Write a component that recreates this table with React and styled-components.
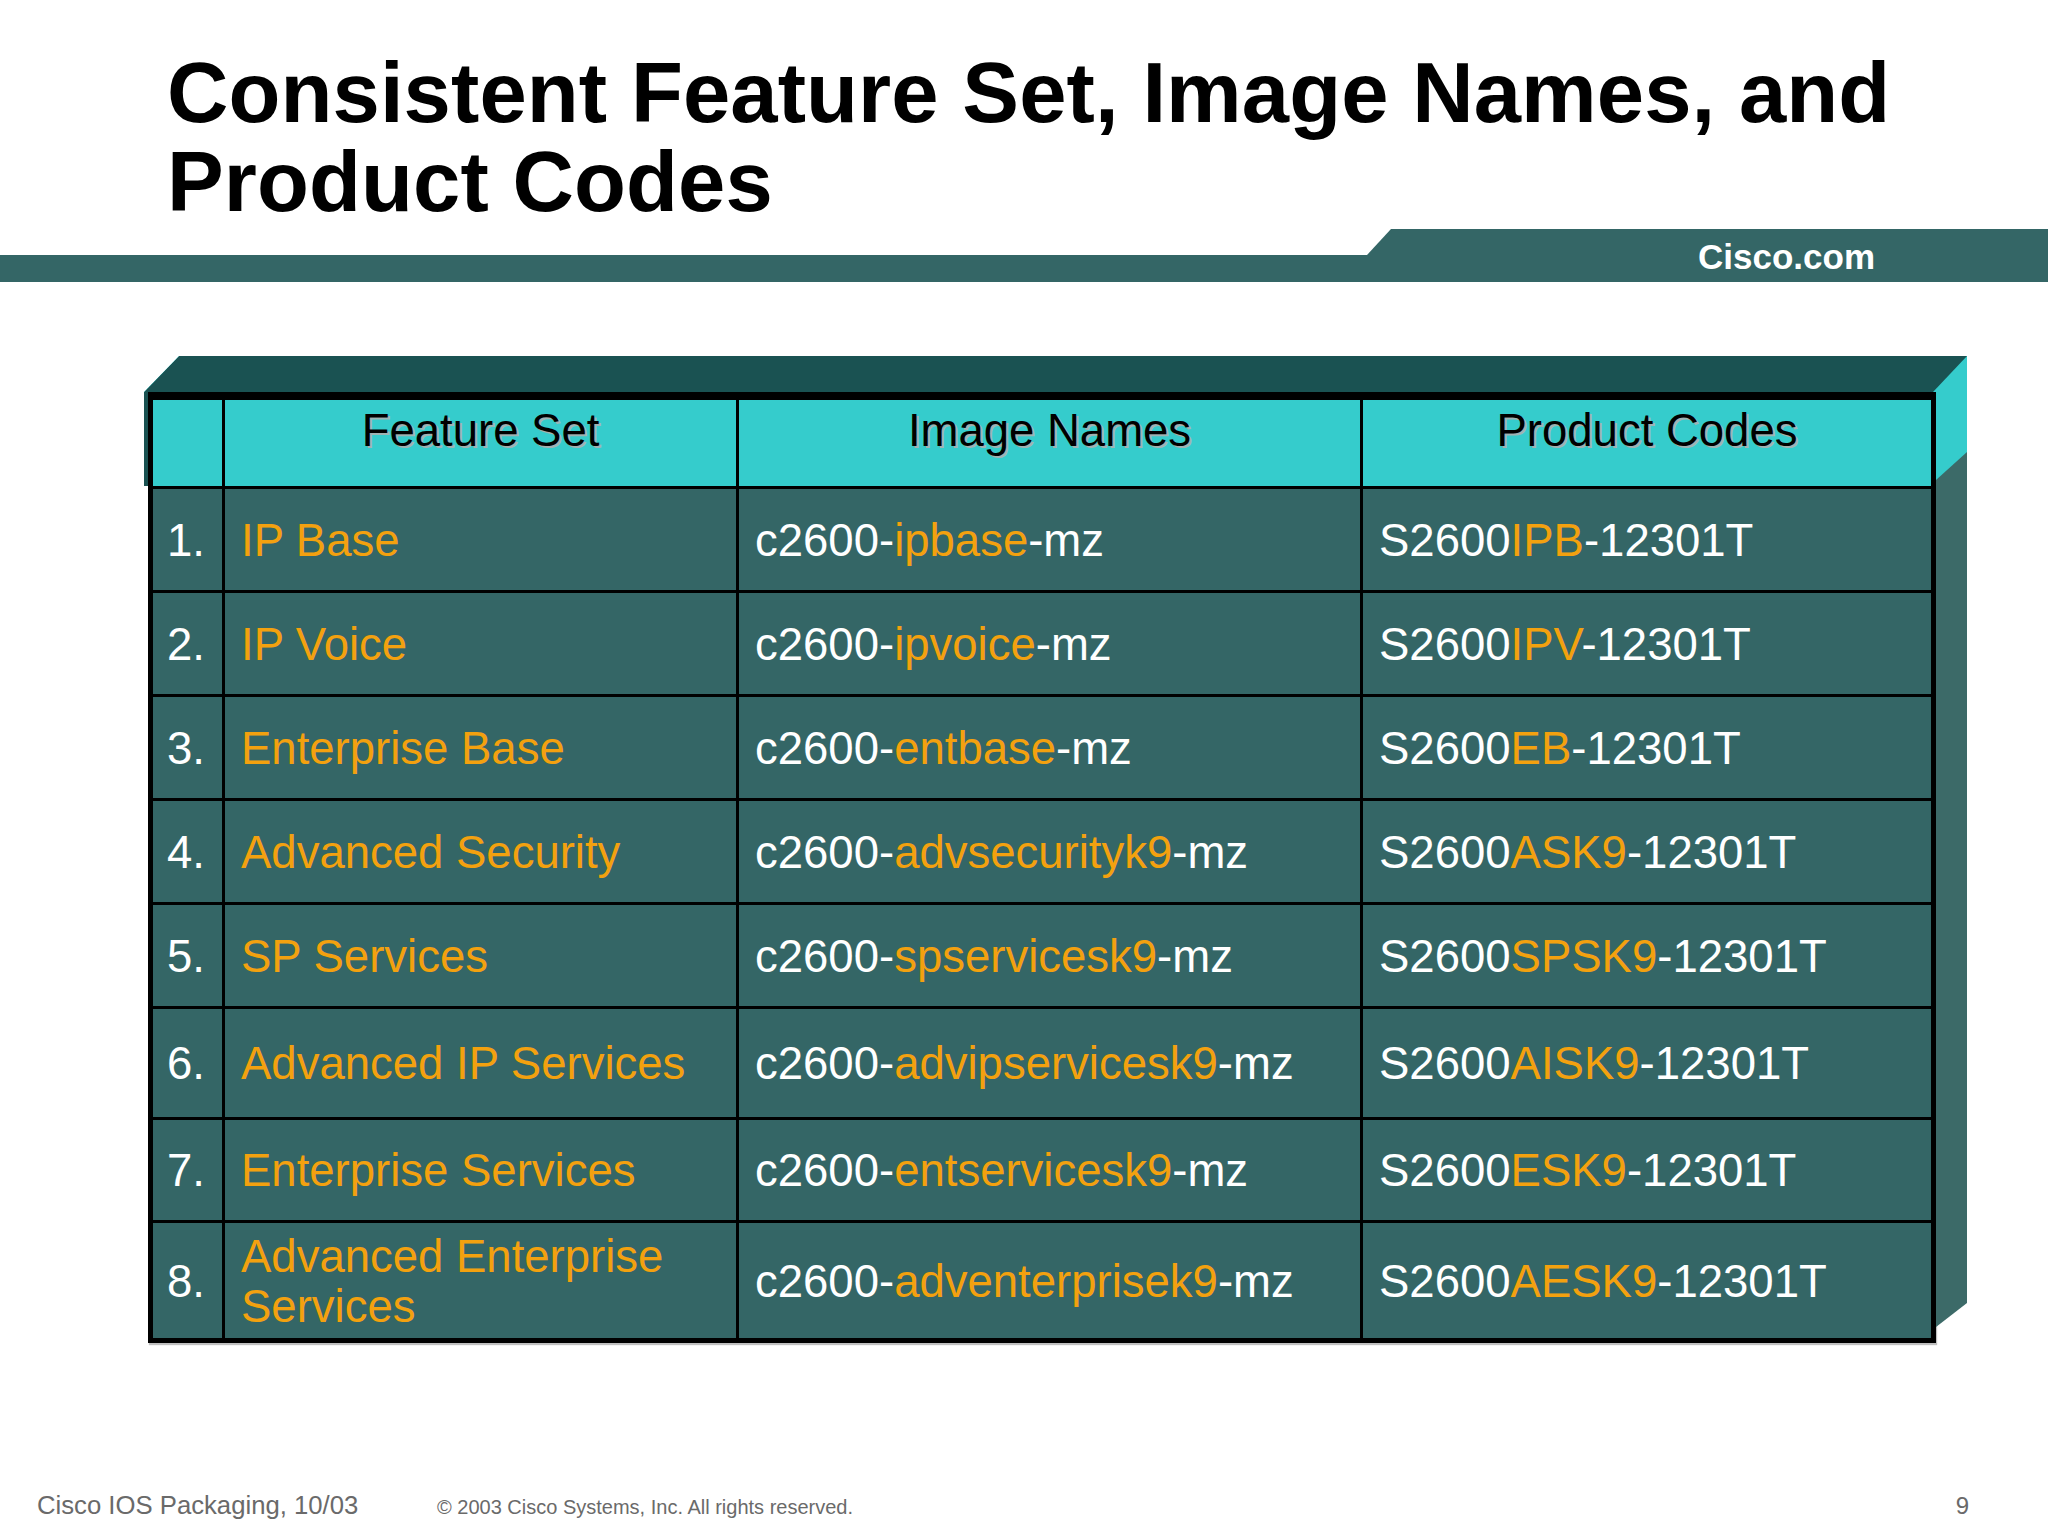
import React from "react";
import styled, { createGlobalStyle } from "styled-components";

const colours = {
  teal: "#346666",
  darkTeal: "#1a5252",
  sideTeal: "#3c6a68",
  cyan: "#35cccc",
  orange: "#f3a10f",
  grey: "#6a6a6a",
};

const GlobalStyle = createGlobalStyle`
  html, body {
    margin: 0;
    padding: 0;
    background: #ffffff;
  }
  body {
    font-family: "Liberation Sans", Arial, sans-serif;
  }
`;

const Slide = styled.div`
  width: 2048px;
  height: 1536px;
  display: flex;
  flex-direction: column;
  background: #ffffff;
  overflow: hidden;
`;

const Title = styled.h1`
  margin: 0;
  padding: 48px 0 0 167px;
  font-size: 85px;
  line-height: 89px;
  font-weight: 700;
  color: #000000;
  letter-spacing: 0.1px;
`;

const Banner = styled.div`
  display: flex;
  align-items: flex-end;
  height: 53px;
  margin-top: 3px;
`;

const BannerBar = styled.div`
  flex: 1;
  height: 27px;
  background: ${colours.teal};
`;

const BannerTab = styled.div`
  width: 681px;
  height: 53px;
  box-sizing: border-box;
  padding: 2px 0 0 331px;
  background: ${colours.teal};
  clip-path: polygon(0 26px, 24px 0, 100% 0, 100% 100%, 0 100%);
  color: #ffffff;
  font-size: 35px;
  line-height: 51px;
  font-weight: 700;
`;

const TableArea = styled.div`
  margin: 74px 0 0 144px;
  width: 1823px;
  display: flex;
  flex-direction: column;
`;

const TopFace = styled.div`
  position: relative;
  height: 36px;
  background: ${colours.cyan};
  clip-path: polygon(35px 0, 100% 0, 100% 100%, 0 100%);
  &::after {
    content: "";
    position: absolute;
    inset: 0;
    background: ${colours.darkTeal};
    clip-path: polygon(35px 0, 100% 0, calc(100% - 34px) 100%, 0 100%);
  }
`;

const TableRow = styled.div`
  display: flex;
  align-items: flex-start;
`;

const LeftLip = styled.div`
  width: 4px;
  height: 94px;
  background: ${colours.darkTeal};
`;

const SideFace = styled.div`
  width: 31px;
  height: 935px;
  background: ${colours.sideTeal};
  clip-path: polygon(0 0, 100% 0, 100% calc(100% - 24px), 0 100%);
`;

const SideCap = styled.div`
  height: 88px;
  background: ${colours.cyan};
  clip-path: polygon(0 0, 100% 0, 100% 60px, 0 100%);
`;

const Grid = styled.div`
  display: grid;
  grid-template-columns: 69px 511px 621px 568px;
  grid-template-rows: 86px 101px 101px 101px 101px 101px 108px 100px 115px;
  gap: 3px;
  background: #000000;
  border: 5px solid #000000;
  border-top-width: 8px;
  box-shadow: 1px 2px 1px rgba(0, 0, 0, 0.25);
`;

const HeadCell = styled.div`
  background: ${colours.cyan};
  color: #000000;
  font-size: 45.5px;
  line-height: 52px;
  padding-top: 5px;
  text-align: center;
  text-shadow: 2px 2px 0 #9fb3b3;
`;

const Cell = styled.div`
  background: ${colours.teal};
  color: ${(p) => (p.$accent ? colours.orange : "#ffffff")};
  font-size: 45.5px;
  line-height: 50px;
  display: flex;
  align-items: center;
  padding-left: ${(p) => (p.$num ? 14 : 16)}px;
  padding-top: 2px;
  box-sizing: border-box;
`;

const Hi = styled.span`
  color: ${colours.orange};
`;

const Footer = styled.div`
  display: flex;
  align-items: baseline;
  margin-top: 147px;
  padding: 0 79px 0 37px;
  color: ${colours.grey};
  line-height: 30px;
`;

const FooterTitle = styled.div`
  width: 400px;
  font-size: 25.7px;
`;

const Copyright = styled.div`
  font-size: 20px;
`;

const PageNum = styled.div`
  margin-left: auto;
  font-size: 24px;
`;

const rows = [
  { feature: "IP Base", image: "ipbase", code: "IPB" },
  { feature: "IP Voice", image: "ipvoice", code: "IPV" },
  { feature: "Enterprise Base", image: "entbase", code: "EB" },
  { feature: "Advanced Security", image: "advsecurityk9", code: "ASK9" },
  { feature: "SP Services", image: "spservicesk9", code: "SPSK9" },
  { feature: "Advanced IP Services", image: "advipservicesk9", code: "AISK9" },
  { feature: "Enterprise Services", image: "entservicesk9", code: "ESK9" },
  {
    feature: (
      <>
        Advanced Enterprise
        <br />
        Services
      </>
    ),
    image: "adventerprisek9",
    code: "AESK9",
  },
];

const App = () => (
  <Slide>
    <GlobalStyle />
    <Title>
      Consistent Feature Set, Image Names, and
      <br />
      Product Codes
    </Title>
    <Banner>
      <BannerBar />
      <BannerTab>Cisco.com</BannerTab>
    </Banner>

    <TableArea>
      <TopFace />
      <TableRow>
        <LeftLip />
        <Grid>
          <HeadCell />
          <HeadCell>Feature Set</HeadCell>
          <HeadCell>Image Names</HeadCell>
          <HeadCell>Product Codes</HeadCell>
          {rows.map((row, i) => (
            <React.Fragment key={`row-${i}`}>
              <Cell $num>{i + 1}.</Cell>
              <Cell $accent>
                <div>{row.feature}</div>
              </Cell>
              <Cell>
                <div>
                  c2600-<Hi>{row.image}</Hi>-mz
                </div>
              </Cell>
              <Cell>
                <div>
                  S2600<Hi>{row.code}</Hi>-12301T
                </div>
              </Cell>
            </React.Fragment>
          ))}
        </Grid>
        <SideFace>
          <SideCap />
        </SideFace>
      </TableRow>
    </TableArea>

    <Footer>
      <FooterTitle>Cisco IOS Packaging, 10/03</FooterTitle>
      <Copyright>© 2003 Cisco Systems, Inc. All rights reserved.</Copyright>
      <PageNum>9</PageNum>
    </Footer>
  </Slide>
);

export default App;
